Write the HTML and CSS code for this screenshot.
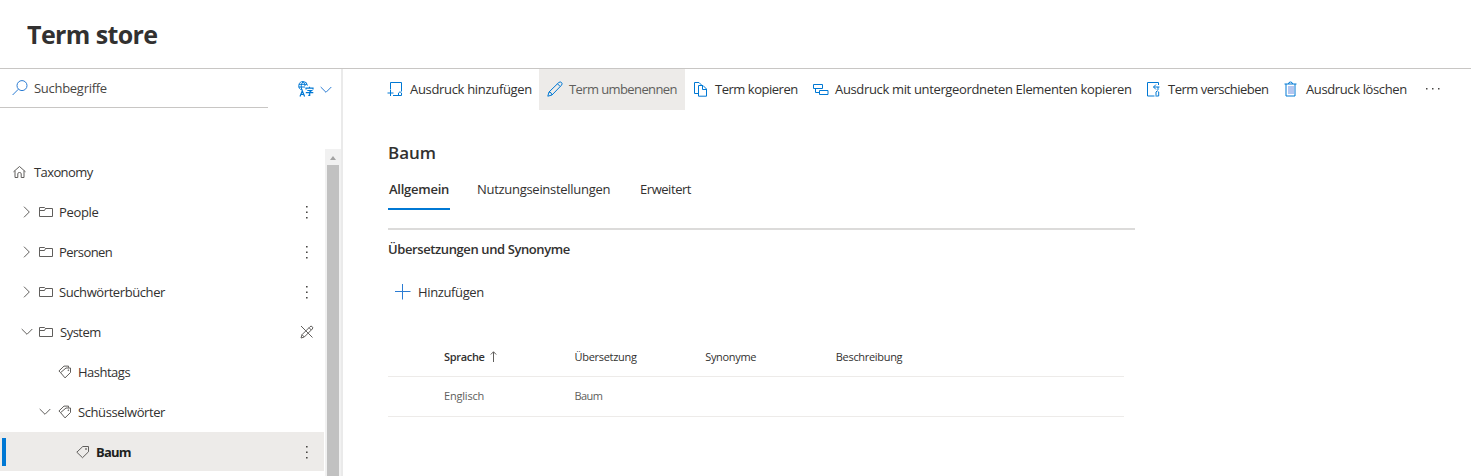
FILE: index.html
```html
<!DOCTYPE html>
<html lang="de">
<head>
<meta charset="utf-8">
<title>Term store</title>
<link rel="stylesheet" href="styles.css">
</head>
<body>
<svg width="0" height="0" class="defs" aria-hidden="true">
  <symbol id="folder" viewBox="0 0 14 12"><path d="M.5 10.500V1.500H5.500L6.500 2.500H13.500V10.500ZM.5 4.500H5.500L6.500 2.500"/></symbol>
  <symbol id="right" viewBox="0 0 8 12"><path d="M1 .7L6.300 6L1 11.300"/></symbol>
  <symbol id="down" viewBox="0 0 12 8"><path d="M.7 1L6 6.300L11.300 1"/></symbol>
  <symbol id="more" viewBox="0 0 4 14"><path class="solid" d="M1 1h1.600v1.600H1zM1 6.500h1.600v1.600H1zM1 12h1.600v1.600H1z"/></symbol>
  <symbol id="tags" viewBox="0 0 14 14"><path d="M2.600 7.600L8 3H12.500V7.500L7 12.900ZM2.600 7.600L.9 6L6 1.100H10.500V2.700"/><circle cx="10.300" cy="5.200" r=".4"/></symbol>
  <symbol id="tag" viewBox="0 0 14 14"><path d="M.8 7.200L6.800 1.500H12.500V6.800L6.500 12.700Z"/><circle cx="10" cy="4" r=".5"/></symbol>
</svg>
<header class="header"><h1>Term store</h1></header>
<div class="body">
  <aside class="sidebar">
    <div class="search-row">
      <div class="search">
        <svg class="blue" width="16" height="16" viewBox="0 0 16 16"><circle cx="10" cy="5.600" r="5"/><path d="M6.400 9.200L.6 15"/></svg>
        <span class="t-search">Suchbegriffe</span>
      </div>
      <svg class="lang" width="16" height="16" viewBox="0 0 16 16"><path d="M9.400 4.600A4.300 4.300 0 1 0 4 9M1 3.300H9M.8 6H7M5 .8C2.800 3 2.800 6.500 4 9M5 .8C6.600 2 7 3.500 7 5"/><path class="bold" d="M2 15.500L4.300 9.900L6.600 15.500M2.800 13.500H5.800M8 8.500V7.200H15V8.500M11.500 5.800V7M9.300 9.500H13.500L11.700 11V14.300H10.300M7.800 11.700H15.300"/></svg>
      <svg class="blue" width="12" height="8"><use href="#down"/></svg>
    </div>
    <div class="tree-area">
      <nav class="tree">
        <div class="row root"><svg width="13" height="14" viewBox="0 0 13 14"><path d="M.5 6.800L6.500 1.500L12.500 6.800M2 5.800V12.500H4.800V8.800Q4.800 7.500 6.500 7.500T8.200 8.800V12.500H11V5.800"/></svg><span class="t-taxonomy">Taxonomy</span></div>
        <div class="row l1"><svg class="chev" width="8" height="12"><use href="#right"/></svg><svg class="folder" width="14" height="12"><use href="#folder"/></svg><span class="t-people">People</span><svg class="more" width="4" height="14"><use href="#more"/></svg></div>
        <div class="row l1"><svg class="chev" width="8" height="12"><use href="#right"/></svg><svg class="folder" width="14" height="12"><use href="#folder"/></svg><span class="t-personen">Personen</span><svg class="more" width="4" height="14"><use href="#more"/></svg></div>
        <div class="row l1"><svg class="chev" width="8" height="12"><use href="#right"/></svg><svg class="folder" width="14" height="12"><use href="#folder"/></svg><span class="t-such">Suchwörterbücher</span><svg class="more" width="4" height="14"><use href="#more"/></svg></div>
        <div class="row l1 open"><svg class="chev" width="12" height="8"><use href="#down"/></svg><svg class="folder" width="14" height="12"><use href="#folder"/></svg><span class="t-system">System</span><svg class="more locked" width="14" height="14" viewBox="0 0 14 14"><path d="M1 1L12.500 12.500M1 13L2 9.700L10 1.700Q11 .6 12.200 1.700T12.300 4L4.300 12ZM9 2.700L11.300 5M2 9.700L4.300 12"/></svg></div>
        <div class="row l2"><svg width="14" height="14"><use href="#tags"/></svg><span class="t-hash">Hashtags</span></div>
        <div class="row l2 open"><svg class="chev" width="12" height="8"><use href="#down"/></svg><svg width="14" height="14"><use href="#tags"/></svg><span class="t-schuessel">Schüsselwörter</span></div>
        <div class="row l3 selected"><i class="marker"></i><svg width="14" height="14"><use href="#tag"/></svg><b class="t-baum">Baum</b><svg class="more" width="4" height="14"><use href="#more"/></svg></div>
      </nav>
      <div class="scrollbar"><svg width="6" height="4" viewBox="0 0 6 4"><path d="M0 4L3 0L6 4Z"/></svg><div class="thumb"></div></div>
    </div>
  </aside>
  <main class="main">
    <div class="toolbar">
      <div class="cmd c1"><svg width="16" height="16" viewBox="0 0 16 16"><path d="M3.500 8.500V1.500H14.500V10.500M6 14.500H11.500M11.500 15V12Q13 9.500 14.500 12V14.500H11.500M3.500 9V15M.5 12H6.500"/></svg><span>Ausdruck hinzufügen</span></div>
      <div class="cmd c2"><svg width="16" height="16" viewBox="0 0 16 16"><path d="M.8 15.200L2 11L11.800 1.500Q13.200.3 14.500 1.500T14.500 4.200L5 14ZM10.500 2.800L13.200 5.500M2 11Q4.500 11 5 14"/></svg><span>Term umbenennen</span></div>
      <div class="cmd c3"><svg width="16" height="16" viewBox="0 0 16 16"><path d="M5 12.500H1.500V1.500H6L8.500 4M5.500 4.500H10L13.500 8V15.200H5.500ZM9.500 4.500V8.500H13.500"/></svg><span>Term kopieren</span></div>
      <div class="cmd c4"><svg width="16" height="16" viewBox="0 0 16 16"><path d="M.5 3.500H9.500V7.500H.5ZM6.500 9.500H15V13.500H6.500ZM2.500 7.500V11.500H6.500"/></svg><span>Ausdruck mit untergeordneten Elementen kopieren</span></div>
      <div class="cmd c5"><svg width="16" height="16" viewBox="0 0 16 16"><path d="M12.500 4V1.500H1.500V15H8.500M13.500 6H7.500M10 3.500L7.500 6L10 8.500M10 14.500V11Q11.300 8.500 12.700 11V15H9.500M12 9V6"/></svg><span>Term verschieben</span></div>
      <div class="cmd c6"><svg width="14" height="16" viewBox="0 0 14 16"><path class="bin" d="M4 5H10V13H4Z"/><path d="M.5 3H12.500M2 3V15H11V3M4.500 3Q4.500 1 6.500 1T8.500 3"/></svg><span>Ausdruck löschen</span></div>
      <svg class="dots" width="16" height="4" viewBox="0 0 16 4"><path d="M1 1h1.500v1.500H1zM7 1h1.500v1.500H7zM13 1h1.500v1.500H13z"/></svg>
    </div>
    <section class="content">
      <h2><span class="t-title">Baum</span></h2>
      <div class="tabs"><span class="tab active">Allgemein</span><span class="tab t-tab2">Nutzungseinstellungen</span><span class="tab t-tab3">Erweitert</span></div>
      <div class="panel">
        <h3><span class="t-sect">Übersetzungen und Synonyme</span></h3>
        <div class="add"><svg class="blue" width="16" height="16" viewBox="0 0 16 16"><path d="M7.500 0V15.500M0 7.500H15.500"/></svg><span class="t-add">Hinzufügen</span></div>
        <div class="table">
          <div class="tr th"><span class="cell"><b>Sprache</b><svg width="8" height="11" viewBox="0 0 8 11"><path d="M3.500 11V.8M.8 3.500L3.500.8L6.200 3.500"/></svg></span><span class="cell">Übersetzung</span><span class="cell">Synonyme</span><span class="cell">Beschreibung</span></div>
          <div class="tr"><span class="cell t-c1">Englisch</span><span class="cell t-c2">Baum</span></div>
        </div>
      </div>
    </section>
  </main>
</div>
</body>
</html>
```
FILE: styles.css
```css
* { box-sizing: border-box; }
body { margin: 0; width: 1471px; height: 476px; overflow: hidden; background: #fff; color: #323130; font: 13px/20px "Open Sans", sans-serif; display: flex; flex-direction: column; }
svg { flex: none; fill: none; stroke: #605e5c; stroke-width: 1; }
.defs { position: absolute; }
.solid { fill: #484644; stroke: none; }
.blue { stroke: #2b7cd3; }
h1, h2, h3 { margin: 0; }
span, b { white-space: nowrap; }
.header { height: 69px; flex: none; border-bottom: 1px solid #c8c6c4; padding: 17px 0 0 27px; }
h1 { font-size: 25px; line-height: 34px; font-weight: 700; letter-spacing: -.6px; }
.body { flex: 1; display: flex; min-height: 0; }
.sidebar { width: 343px; border-right: 2px solid #eaeaea; display: flex; flex-direction: column; flex: none; }
.search-row { height: 80px; display: flex; flex: none; align-items: flex-start; }
.search { width: 268px; height: 39px; border-bottom: 1px solid #c8c6c4; display: flex; align-items: center; gap: 6px; padding-left: 12px; margin-right: 30px; color: #484644; }
.lang { stroke: #0078d4; margin-top: 12px; margin-right: 6px; }
.bold { stroke-width: 1.2; }
.search-row > .blue { margin-top: 17px; }
.tree-area { flex: 1; display: flex; min-height: 0; }
.tree { width: 325px; padding-top: 3px; }
.row { height: 40px; display: flex; align-items: center; padding-right: 16px; }
.root { padding-left: 13px; gap: 8px; }
.l1 { padding-left: 23px; }
.l1 .chev { margin-right: 8px; }
.l1.open .chev { margin-right: 6px; margin-left: -2px; }
.folder { margin-right: 6px; }
.open .folder { margin-right: 7px; }
.more { margin-left: auto; }
.locked { margin-right: -5px; }
.l2 { padding-left: 58px; gap: 6px; }
.l2.open { padding-left: 39px; }
.l2.open .chev { margin: 0 1px 0 0; }
.l3 { gap: 6px; }
.selected { background: #edebe9; height: 39px; width: 324px; padding-right: 15px; padding-left: 2px; color: #201f1e; }
.marker { width: 4px; height: 28px; background: #0078d4; margin-right: 64px; }
.t-search { letter-spacing: -.28px; }
.t-taxonomy { letter-spacing: -.6px; }
.t-people { letter-spacing: -.35px; }
.t-personen { letter-spacing: -.55px; }
.t-such, .t-schuessel { letter-spacing: -.41px; }
.t-system, .t-hash { letter-spacing: -.5px; }
.t-baum { letter-spacing: -.8px; }
.scrollbar { width: 16px; background: #f1f1f1; display: flex; flex-direction: column; align-items: center; padding-top: 7px; }
.scrollbar svg { fill: #a3a3a3; stroke: none; margin-bottom: 5px; }
.thumb { width: 12px; flex: 1; background: #c1c1c1; }
.main { flex: 1; display: flex; flex-direction: column; min-width: 0; }
.toolbar { height: 41px; display: flex; padding-left: 36px; }
.cmd { display: flex; align-items: center; gap: 6px; padding: 0 0 1px 8px; flex: none; }
.cmd svg, .dots { stroke: #0078d4; }
.cmd .bin { fill: #b4c6f0; stroke: none; }
.c1 { width: 160px; gap: 7px; letter-spacing: -.32px; }
.c2 { width: 146px; background: #edebe9; color: #605e5c; letter-spacing: -.6px; }
.c3 { width: 120px; letter-spacing: -.48px; }
.c4 { width: 333px; letter-spacing: -.345px; }
.c5 { width: 138px; letter-spacing: -.5px; }
.c6 { width: 141px; gap: 8px; letter-spacing: -.38px; }
.toolbar .dots { fill: #484644; stroke: none; margin-top: 18px; margin-left: 8px; }
.content { padding: 32px 0 0 45px; width: 792px; }
h2 { font-size: 17px; line-height: 22px; font-weight: 600; height: 26px; }
.tabs { display: flex; height: 42px; }
.tab { height: 42px; line-height: 42px; }
.active { width: 62px; padding-left: 1px; margin-right: 27px; border-bottom: 2px solid #0078d4; font-weight: 600; letter-spacing: -.25px; }
.t-tab2 { width: 163px; letter-spacing: -.29px; }
.t-tab3 { letter-spacing: -.45px; }
.panel { margin-top: 18px; border-top: 2px solid #dcdbda; }
h3 { font-size: 13px; line-height: 20px; font-weight: 600; padding-top: 9px; }
.t-sect { letter-spacing: -.4px; }
.add { display: flex; align-items: center; gap: 7px; padding-left: 7px; height: 20px; margin-top: 23px; }
.t-add { letter-spacing: -.37px; }
.table { width: 736px; margin-top: 35px; font-size: 11px; line-height: 20px; letter-spacing: -.31px; }
.tr { display: flex; align-items: center; height: 40px; padding: 0 0 2px 56px; border-bottom: 1px solid #edebe9; color: #605e5c; }
.th { color: #323130; padding-bottom: 0; }
.cell { width: 130.6px; display: flex; align-items: center; gap: 5px; }
.cell b { font-weight: 600; }
.t-c1 { letter-spacing: -.2px; }
.t-c2 { letter-spacing: -.6px; }
```
